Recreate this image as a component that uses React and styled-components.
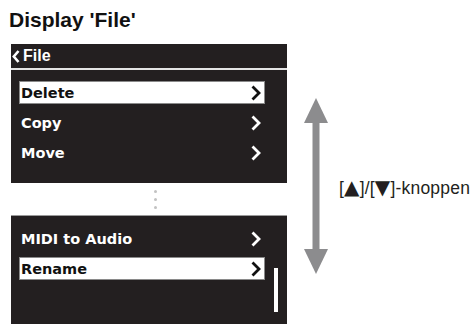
import React from "react";
import styled, { createGlobalStyle } from "styled-components";

const GlobalStyle = createGlobalStyle`
  html, body {
    margin: 0;
    padding: 0;
    background: #ffffff;
    overflow: hidden;
  }
  body {
    font-family: "Liberation Sans", Arial, sans-serif;
  }
`;

const Page = styled.div`
  width: 472px;
  height: 324px;
  overflow: hidden;
`;

const Title = styled.h1`
  margin: 8px 0 13px 9px;
  font-size: 21px;
  line-height: 23px;
  font-weight: 700;
  color: #111;
`;

const Main = styled.div`
  display: flex;
  align-items: flex-start;
  padding-left: 11px;
`;

const Screens = styled.div`
  width: 276px;
  flex-shrink: 0;
  display: flex;
  flex-direction: column;
`;

const Panel = styled.div`
  position: relative;
  background: #231f20;
  height: ${(p) => p.$h}px;
  border-top: ${(p) => (p.$topLine ? "1px solid #9a9a9a" : "none")};
  box-sizing: border-box;
`;

const Header = styled.div`
  height: 24px;
  display: flex;
  align-items: center;
  gap: 3px;
  padding-left: 1px;
  color: #fff;
  font: 700 16px "Liberation Sans", Arial, sans-serif;
  border-bottom: 2px solid #e4e4e4;
`;

const List = styled.div`
  display: flex;
  flex-direction: column;
  gap: 7px;
  padding: ${(p) => p.$pt}px 0 0 8px;
`;

const Row = styled.div`
  width: 246px;
  height: 23px;
  box-sizing: border-box;
  display: flex;
  align-items: center;
  justify-content: space-between;
  padding: 1px 3px 0 1px;
  font: 700 14.5px "DejaVu Sans", sans-serif;
  color: ${(p) => (p.$active ? "#111" : "#fff")};
  background: ${(p) => (p.$active ? "#fff" : "transparent")};
  border: 1px solid ${(p) => (p.$active ? "#8a8a8a" : "transparent")};
`;

const Dots = styled.div`
  height: 32px;
  display: flex;
  flex-direction: column;
  align-items: center;
  justify-content: center;
  gap: 5px;
  padding-left: 12px;
`;

const Dot = styled.span`
  width: 3px;
  height: 3px;
  border-radius: 50%;
  background: #c2c2c2;
`;

const ScrollBar = styled.div`
  position: absolute;
  right: 9px;
  top: 52px;
  width: 4px;
  height: 44px;
  background: #fff;
`;

const Side = styled.div`
  display: flex;
  align-items: center;
  gap: 11px;
  margin: 54px 0 0 17px;
`;

const Label = styled.span`
  font: 400 17.5px "Liberation Sans", "DejaVu Sans", sans-serif;
  letter-spacing: 0.2px;
  color: #231f20;
  white-space: nowrap;
  margin-top: 3px;
`;

const Tri = styled.span`
  font-family: "DejaVu Sans", sans-serif;
  font-size: 20px;
  line-height: 1;
`;

const Chevron = ({ color }) => (
  <svg width="10" height="16" viewBox="0 0 10 16">
    <polyline
      points="1.5,1.5 8,8 1.5,14.5"
      fill="none"
      stroke={color}
      strokeWidth="2.8"
    />
  </svg>
);

const BackChevron = () => (
  <svg width="8" height="13" viewBox="0 0 8 13">
    <polyline
      points="6.5,1 1.8,6.5 6.5,12"
      fill="none"
      stroke="#fff"
      strokeWidth="2.6"
    />
  </svg>
);

const Arrow = () => (
  <svg width="24" height="176" viewBox="0 0 24 176">
    <polygon points="12,0 24,25 0,25" fill="#8c8c8e" />
    <rect x="8.5" y="24" width="7" height="128" fill="#8c8c8e" />
    <polygon points="0,151 24,151 12,176" fill="#8c8c8e" />
  </svg>
);

const MenuRow = ({ label, active }) => (
  <Row $active={active}>
    <span>{label}</span>
    <Chevron color={active ? "#111" : "#fff"} />
  </Row>
);

export default function App() {
  return (
    <Page>
      <GlobalStyle />
      <Title>Display 'File'</Title>
      <Main>
        <Screens>
          <Panel $h={139}>
            <Header>
              <BackChevron />
              <span>File</span>
            </Header>
            <List $pt={11}>
              <MenuRow label="Delete" active />
              <MenuRow label="Copy" />
              <MenuRow label="Move" />
            </List>
          </Panel>
          <Dots>
            <Dot />
            <Dot />
            <Dot />
          </Dots>
          <Panel $h={112} $topLine>
            <List $pt={11}>
              <MenuRow label="MIDI to Audio" />
              <MenuRow label="Rename" active />
            </List>
            <ScrollBar />
          </Panel>
        </Screens>
        <Side>
          <Arrow />
          <Label>
            [<Tri>▲</Tri>]/[<Tri>▼</Tri>]-knoppen
          </Label>
        </Side>
      </Main>
    </Page>
  );
}
